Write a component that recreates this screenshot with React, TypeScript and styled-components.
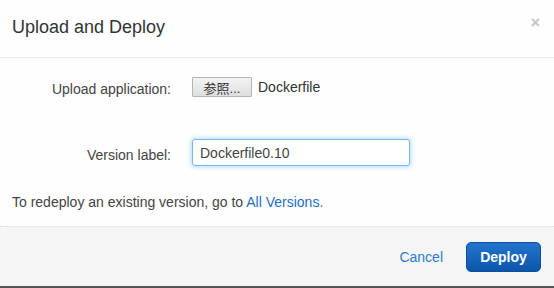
import React from 'react';
import styled, { createGlobalStyle } from 'styled-components';

const GlobalStyle = createGlobalStyle`
  html, body {
    margin: 0;
    padding: 0;
    background: #ffffff;
  }
  * {
    box-sizing: border-box;
  }
`;

const S = {
  Modal: styled.div`
    width: 554px;
    height: 288px;
    display: flex;
    flex-direction: column;
    background: #fdfefd;
    font-family: 'Liberation Sans', Arial, sans-serif;
    color: #444;
    border-bottom: 2px solid #555;
  `,
  Header: styled.header`
    height: 58px;
    display: flex;
    align-items: center;
    justify-content: space-between;
    padding: 0 14px 2px 12px;
    border-bottom: 1px solid #ececec;
  `,
  Title: styled.h2`
    margin: 0;
    font-size: 18px;
    font-weight: 400;
    color: #333;
  `,
  Close: styled.button`
    align-self: flex-start;
    margin-top: 15px;
    padding: 0;
    border: none;
    background: none;
    font-family: 'Liberation Sans', Arial, sans-serif;
    font-size: 16px;
    font-weight: 700;
    line-height: 1;
    color: #c4c4c4;
    cursor: pointer;
  `,
  Body: styled.div`
    flex: 1;
    padding: 18px 12px 0;
    display: flex;
    flex-direction: column;
  `,
  Form: styled.div`
    display: grid;
    grid-template-columns: 159px 1fr;
    column-gap: 21px;
    row-gap: 42px;
    align-items: center;
  `,
  Label: styled.label`
    padding-top: 5px;
    text-align: right;
    font-size: 14px;
    color: #444;
  `,
  FileRow: styled.div`
    display: flex;
    align-items: center;
    gap: 6px;
    font-size: 14px;
    color: #333;
  `,
  Browse: styled.button`
    width: 60px;
    height: 20px;
    padding: 0;
    border: 1px solid #b5b5b5;
    border-radius: 1px;
    background: linear-gradient(#f4f4f4, #dedede);
    font-family: 'Liberation Sans', 'Noto Sans CJK JP', sans-serif;
    font-size: 13px;
    color: #333;
  `,
  Input: styled.input`
    width: 218px;
    height: 27px;
    padding: 0 7px;
    border: 1px solid #7fb6ec;
    border-radius: 3px;
    box-shadow: 0 0 4px 1px rgba(102, 170, 235, 0.45);
    font-family: 'Liberation Sans', Arial, sans-serif;
    font-size: 14px;
    color: #444;
    outline: none;
  `,
  Hint: styled.p`
    margin: 26px 0 0;
    font-size: 14px;
    line-height: 20px;
    color: #444;
  `,
  Link: styled.a`
    color: #1f6fc5;
    text-decoration: none;
  `,
  Footer: styled.footer`
    height: 60px;
    display: flex;
    align-items: center;
    justify-content: flex-end;
    gap: 23px;
    padding: 0 13px 0 0;
    background: #f5f5f5;
    border-top: 1px dotted #d8d8d8;
  `,
  Cancel: styled.button`
    padding: 0;
    border: none;
    background: none;
    font-family: 'Liberation Sans', Arial, sans-serif;
    font-size: 14px;
    color: #2c7bd3;
    cursor: pointer;
  `,
  Deploy: styled.button`
    width: 75px;
    height: 30px;
    border: 1px solid #0b4f9e;
    border-radius: 5px;
    background: linear-gradient(#2274cc, #0c56ad);
    font-family: 'Liberation Sans', Arial, sans-serif;
    font-size: 14px;
    font-weight: 700;
    color: #fff;
    cursor: pointer;
  `,
};

const App = () => {
  return (
    <>
      <GlobalStyle />
      <S.Modal>
        <S.Header>
          <S.Title>Upload and Deploy</S.Title>
          <S.Close aria-label="Close">×</S.Close>
        </S.Header>
        <S.Body>
          <S.Form>
            <S.Label>Upload application:</S.Label>
            <S.FileRow>
              <S.Browse>参照...</S.Browse>
              <span>Dockerfile</span>
            </S.FileRow>
            <S.Label>Version label:</S.Label>
            <S.Input defaultValue="Dockerfile0.10" />
          </S.Form>
          <S.Hint>
            To redeploy an existing version, go to <S.Link href="#">All Versions.</S.Link>
          </S.Hint>
        </S.Body>
        <S.Footer>
          <S.Cancel>Cancel</S.Cancel>
          <S.Deploy>Deploy</S.Deploy>
        </S.Footer>
      </S.Modal>
    </>
  );
};

export default App;
